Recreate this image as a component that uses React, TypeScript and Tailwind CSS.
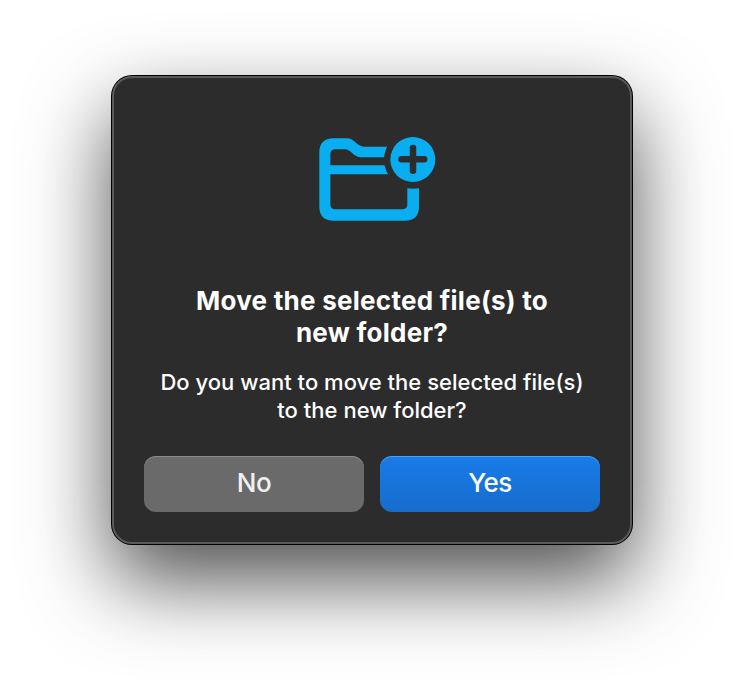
function FolderPlusIcon() {
  return (
    <svg className="h-[110px] w-[150px]" viewBox="0 0 450 330" fill="#08aeef">
      <mask id="badge-gap">
        <rect width="450" height="330" fill="white" />
        <circle cx="339" cy="104" r="87" fill="black" />
      </mask>
      <path
        mask="url(#badge-gap)"
        fillRule="evenodd"
        d="M58 82C58 55 73 40 100 40H138C167 40 168 65 194 65H357V245C357 272 342 287 315 287H100C73 287 58 272 58 245ZM91 121V89C91 78 97 73 107 73H134C155 73 158 97 185 97H300V121ZM91 148H322V237C322 248 317 253 306 253H107C96 253 91 248 91 237Z"
      />
      <circle cx="338.500" cy="103.500" r="67.500" />
      <path d="M339 69V137M304.500 103H372.500" stroke="#2c2c2c" strokeWidth="19.500" strokeLinecap="round" />
    </svg>
  );
}

export default function App() {
  return (
    <main className="flex h-[692px] w-[744px] justify-center overflow-hidden bg-white pt-[76px] font-['Inter',sans-serif]">
      <section className="flex h-[468px] w-[520px] flex-col items-center rounded-[20px] border-2 border-[#5a5a5a] bg-[#2c2c2c] px-[30px] pt-[47px] text-center text-white shadow-[0_0_0_1px_#000,0_36px_84px_rgba(0,0,0,0.7)]">
        <div className="flex w-full justify-center pl-1.5">
          <FolderPlusIcon />
        </div>
        <h1 className="mt-[50px] text-[26px] leading-8 font-bold tracking-[0.26px] whitespace-nowrap">
          Move the selected file(s) to
          <br />
          new folder?
        </h1>
        <p className="mt-[19px] text-[22px] leading-7 font-[450] tracking-[0.02px] whitespace-nowrap">
          Do you want to move the selected file(s)
          <br />
          to the new folder?
        </p>
        <div className="mt-8 grid w-full grid-cols-2 gap-4">
          <button className="h-14 rounded-xl bg-[#6a6a6a] pb-[3px] text-[26px] font-[450] tracking-[-0.5px] text-[#f0f0f0] shadow-[inset_0_1px_0_#8b8b8b]">No</button>
          <button className="h-14 rounded-xl bg-linear-to-b from-[#187ce9] to-[#176ccc] pb-[3px] text-[26px] font-[450] tracking-[-0.5px] shadow-[inset_0_1px_0_#529cee]">Yes</button>
        </div>
      </section>
    </main>
  );
}
